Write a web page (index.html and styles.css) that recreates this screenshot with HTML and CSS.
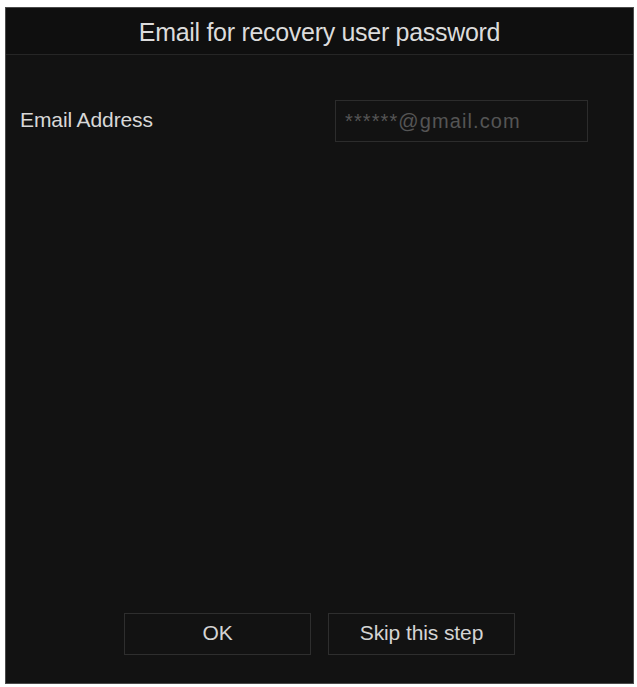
FILE: index.html
```html
<!DOCTYPE html>
<html lang="en">
<head>
<meta charset="utf-8">
<title>Email for recovery user password</title>
<link rel="stylesheet" href="styles.css">
</head>
<body>
<div class="dialog">
  <div class="dialog-header">Email for recovery user password</div>
  <div class="dialog-body">
    <div class="form-row">
      <label class="form-label" for="email">Email Address</label>
      <input class="form-input" id="email" type="text" placeholder="******@gmail.com">
    </div>
  </div>
  <div class="dialog-footer">
    <button class="btn" type="button">OK</button>
    <button class="btn" type="button">Skip this step</button>
  </div>
</div>
</body>
</html>
```

FILE: styles.css
```css
* { box-sizing: border-box; }

html, body {
  margin: 0;
  padding: 0;
  background: #ffffff;
}

body {
  padding: 7px 3px 3px 5px;
  font-family: "Liberation Sans", Arial, sans-serif;
}

.dialog {
  width: 629px;
  height: 677px;
  background: #121212;
  border: 1px solid #4a4a4a;
  display: flex;
  flex-direction: column;
}

.dialog-header {
  height: 47px;
  border-bottom: 1px solid #262626;
  background: #0f0f0f;
  color: #dcdcdc;
  font-size: 25px;
  letter-spacing: -0.3px;
  padding-top: 2px;
  display: flex;
  align-items: center;
  justify-content: center;
}

.dialog-body {
  flex: 1;
  padding: 45px 14px 0 14px;
}

.form-row {
  display: grid;
  grid-template-columns: 315px 253px;
  align-items: center;
}

.form-label {
  color: #d8d8d8;
  font-size: 21px;
  letter-spacing: -0.1px;
  padding-bottom: 2px;
}

.form-input {
  height: 42px;
  background: #121212;
  border: 1px solid #2c2c2c;
  padding: 0 8px 0 9px;
  font-family: "Liberation Sans", Arial, sans-serif;
  font-size: 20px;
  letter-spacing: 1.1px;
  color: #555;
  outline: none;
}

.form-input::placeholder {
  color: #555555;
}

.dialog-footer {
  display: flex;
  justify-content: center;
  gap: 17px;
  padding-bottom: 28px;
}

.btn {
  width: 187px;
  height: 42px;
  background: #121212;
  border: 1px solid #2e2e2e;
  color: #d4d4d4;
  font-family: "Liberation Sans", Arial, sans-serif;
  font-size: 21px;
  letter-spacing: -0.1px;
  padding: 0 0 2px 0;
  cursor: pointer;
}
```
